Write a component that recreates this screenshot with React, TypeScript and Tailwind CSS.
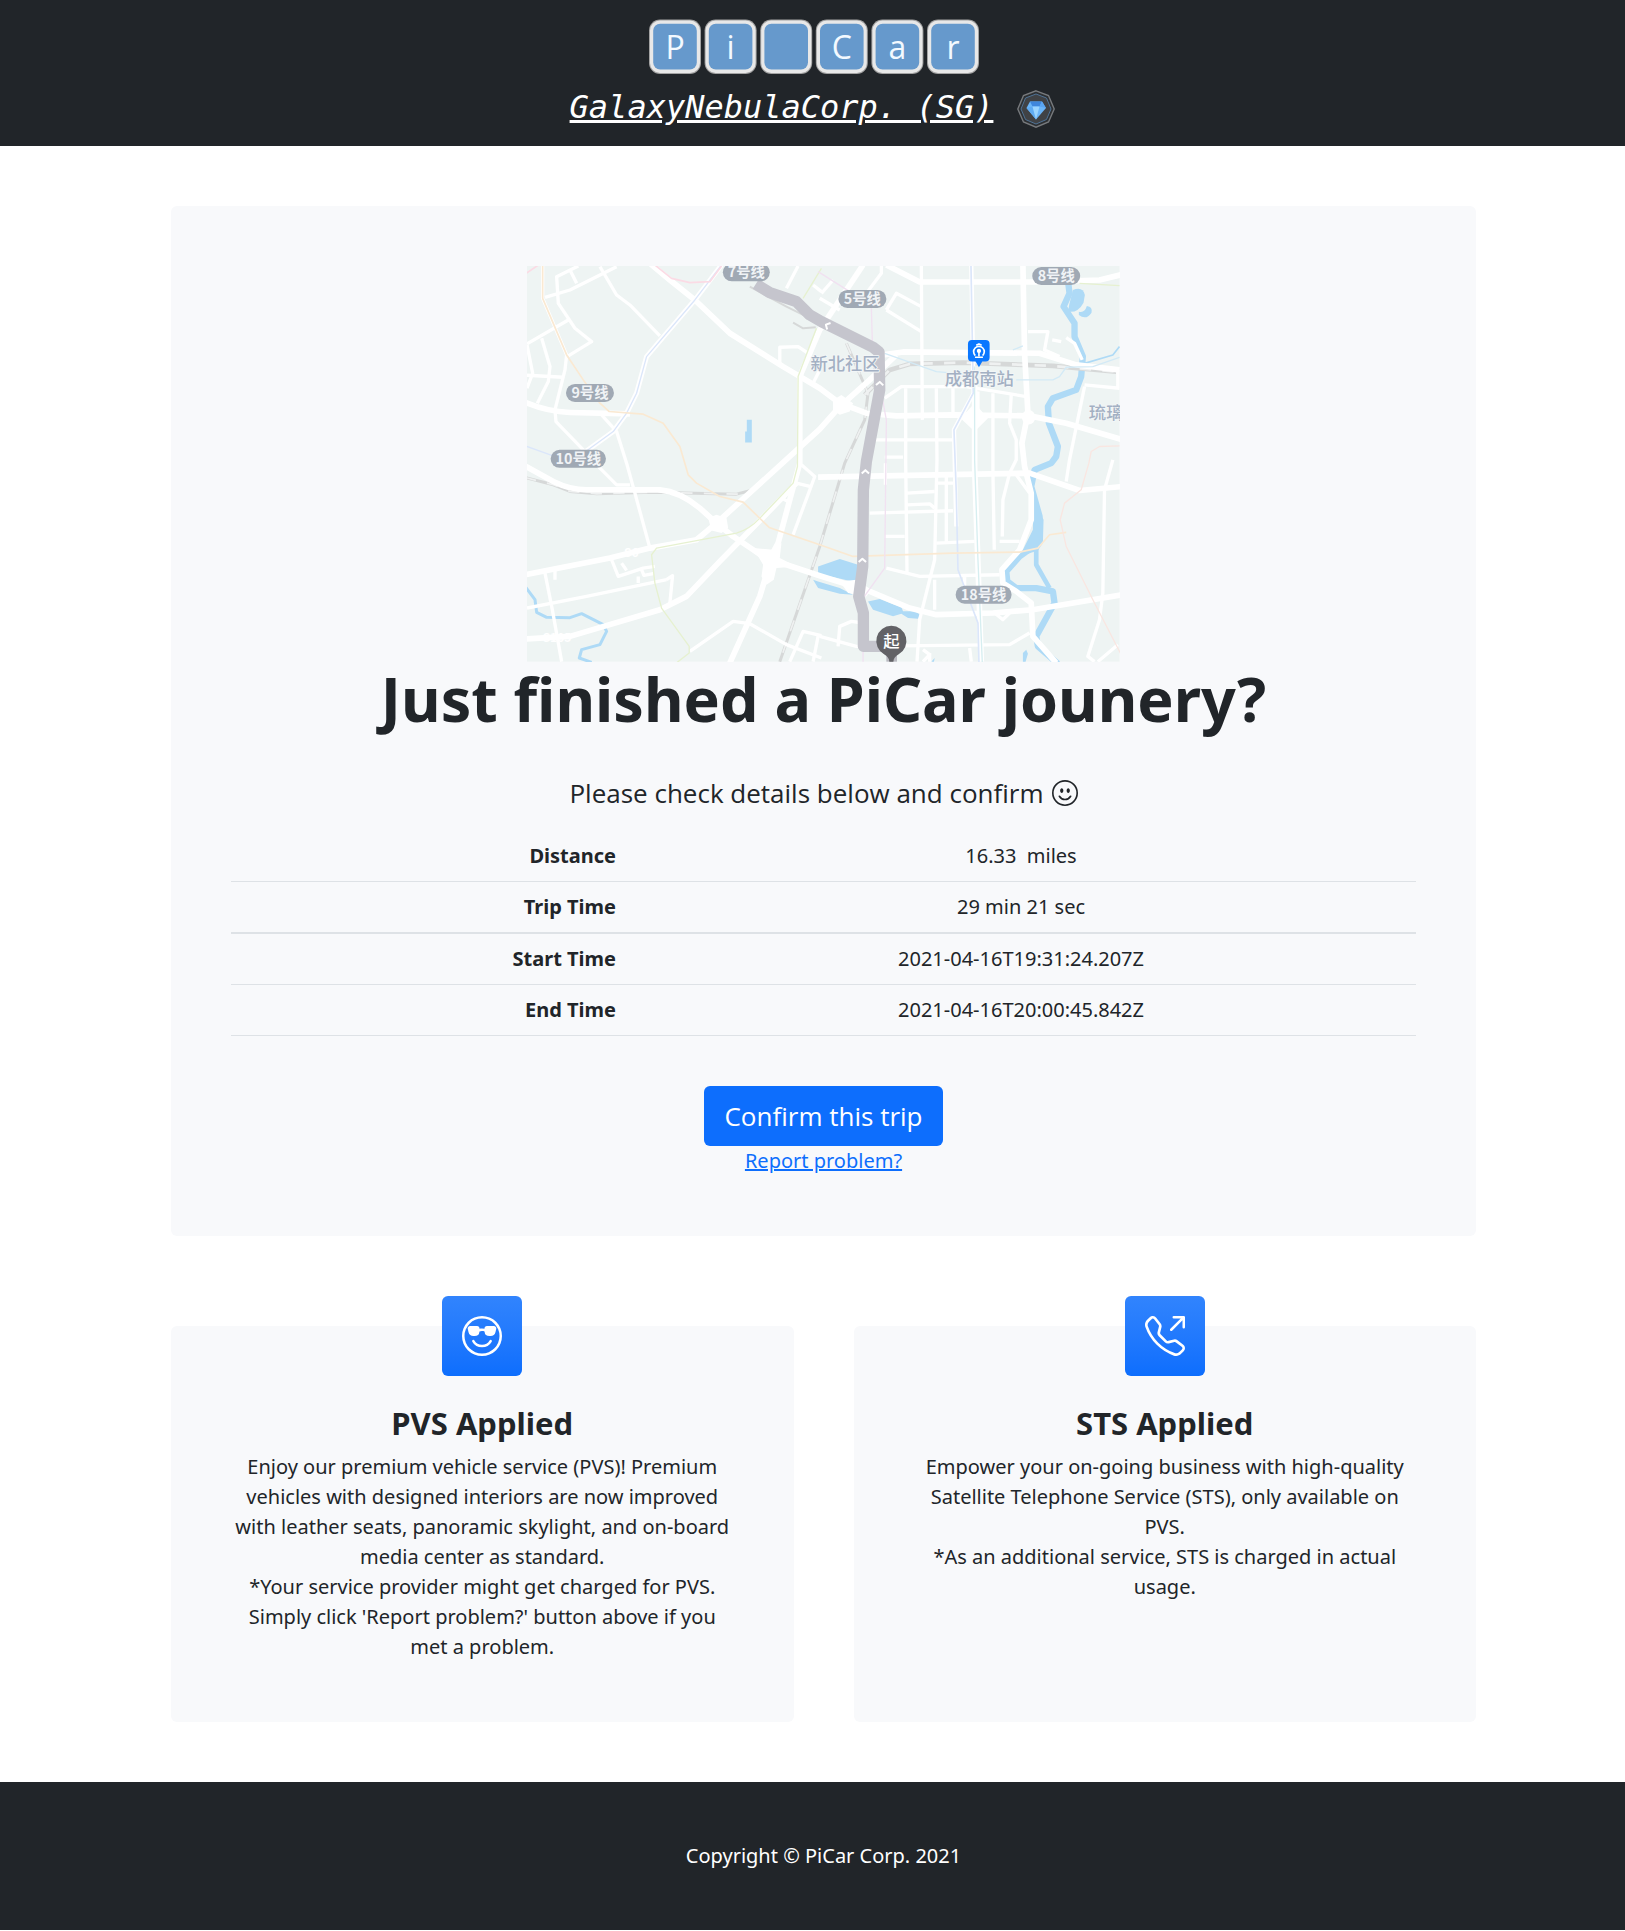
import { BsEmojiSmile, BsEmojiSunglasses, BsTelephoneOutbound } from "react-icons/bs";
import type { ReactNode } from "react";

const LOGO_LETTERS = ["P", "i", "", "C", "a", "r"];

function Logo() {
  return (
    <svg viewBox="0 0 332 56" className="h-14 w-[332px]" role="img" aria-label="Pi Car">
      {LOGO_LETTERS.map((letter, i) => (
        <g key={i} transform={`translate(${2 + i * 55.6} 0)`}>
          <rect x="0" y="0.5" width="52" height="54.5" rx="11" fill="#a3a3a3" />
          <rect x="1" y="1.5" width="50" height="52.5" rx="10" fill="#e8e8e8" />
          <rect x="4.2" y="4.8" width="43.6" height="45.8" rx="7" fill="#6699cc" />
          <text x="26" y="39.5" textAnchor="middle" fontFamily="'Open Sans', sans-serif" fontSize="32" fill="#f3f9ff">
            {letter}
          </text>
        </g>
      ))}
    </svg>
  );
}

function DiamondBadge() {
  return (
    <svg viewBox="0 0 38 38" className="size-[38px]" aria-hidden="true">
      <polygon points="19,0.8 31.5,5.5 37.2,19 31.5,32 19,37.2 6.5,32 0.8,19 6.5,5.5" fill="#2d3033" stroke="#777a7d" strokeWidth="1.4" />
      <polygon points="19,4 29.5,8 34,19 29.5,29.5 19,34 8.5,29.5 4,19 8.5,8" fill="#404245" stroke="#4f7396" strokeWidth="1" />
      <polygon points="13,11.5 25,11.5 29,18 19,29.5 9.5,18" fill="#6bb5f8" />
      <polygon points="13,11.5 25,11.5 22.5,16.5 15.5,16.5" fill="#3f86dc" />
      <polygon points="9.5,18 15.5,16.5 19,29.5" fill="#5fabf2" />
      <polygon points="15.5,16.5 22.5,16.5 19,29.5" fill="#9ad4ff" />
      <polygon points="25,11.5 29,18 22.5,16.5" fill="#5aa5f2" />
    </svg>
  );
}

const THIN_ROADS = [
  "M68 18V115L140 285L135 330L105 450L108 485L190 570L240 625L290 675H330",
  "M75 112L150 90L290 20",
  "M175 18L110 50L115 130L165 205L215 245L145 288",
  "M150 30L170 70",
  "M21 252L145 180",
  "M21 255L38 340L21 385",
  "M65 235L90 320L85 365L52 430",
  "M21 346L130 352",
  "M240 20L290 105L330 135L420 228",
  "M245 465L290 515L320 610L345 700L390 865",
  "M21 1045L200 1010L440 960M440 960L458 948L450 1030",
  "M510 1175L640 1085L690 1092L800 1155L905 1195",
  "M810 1206L850 1115L905 1128M880 1206L895 1130",
  "M75 940L97 1050L125 1206M105 930V960",
  "M275 900L295 950L370 925L405 920M365 930L372 947L400 942M305 910L320 932M355 970V950",
  "M845 615L885 650L820 825M830 670L870 680M785 715L805 725",
  "M780 315V262L835 260L865 280M900 330L880 370",
  "M835 18L800 85M880 75L905 95",
  "M1085 18V40L1040 100M900 115L960 150M905 100L940 60",
  "M1100 150L1130 100L1205 140M1100 150L1205 215",
  "M1205 18L1208 480",
  "M1525 215H1585L1575 270L1620 290M1598 240L1625 245M1640 233L1665 250L1688 300",
  "M1095 415L1145 380H1340L1520 410",
  "M1158 385V600L1162 940",
  "M1250 385L1252 600L1245 900L1200 1080L1192 1206",
  "M1300 385V470M1375 395V470M1420 400V640L1424 870",
  "M1475 405L1470 490L1490 540V600L1470 640L1450 720L1448 830",
  "M1065 540H1300M1095 592H1150",
  "M1162 700L1245 695M1162 735L1230 732L1245 745",
  "M1050 760L1300 753M1250 670H1300M1280 640V850M1250 850L1365 845",
  "M1095 830H1155M1440 845H1500M1097 610V675",
  "M1100 925L1200 950L1440 945M1335 945V980",
  "M1245 960V1050",
  "M1780 600L1755 690L1750 1000L1740 1080L1705 1190L1725 1206",
  "M1640 665L1650 600L1695 380M1695 375L1800 385M1795 385V330",
  "M900 1130L1010 1160L1470 1155L1530 1120",
  "M955 1160L960 1100L995 1085L1030 1090",
  "M1350 1165L1355 1206M1735 1206L1795 1155",
  "M1490 645L1530 700M1425 1060L1450 1080L1470 1060",
  "M1210 1170L1230 1185L1210 1206M1230 1180V1206",
];

const WIDE_ROADS = [
  "M390 10L450 60L525 120L630 220L790 320L900 385L960 430L1040 460L1130 468L1300 465L1530 468L1640 490L1810 540",
  "M15 427Q80 455 150 458L330 462",
  "M15 618L100 665Q150 690 200 690H420Q480 695 540 745L590 790L640 830L700 870L750 905L800 915L900 948L1050 995L1170 1045L1250 1065L1420 1060L1540 1050L1810 1005",
  "M15 945L270 895L390 865L530 840L590 790L900 508L960 440L1050 360L1130 285",
  "M15 1138L150 1130L420 1050L500 1010L600 905L830 670",
  "M750 910L720 1010L630 1210",
  "M745 905L775 850L810 720L840 610V350L900 210L1030 15",
  "M1100 15L1200 66H1560L1740 60L1810 43",
  "M1090 285L1150 276L1560 280L1670 315L1800 330",
  "M1510 15L1515 280L1525 460L1507 550L1515 620L1535 700V780L1500 870L1447 930L1450 970L1490 995L1535 1030L1540 1130L1610 1210",
  "M895 652L1250 645L1530 640L1680 692L1810 680",
  "M1365 350V620L1385 1206",
];

const RIVERS = [
  "M1645 60L1650 100L1632 140L1665 190V230L1690 290L1685 350L1670 390L1600 415L1585 440L1588 490L1615 560L1610 590L1595 610L1545 630L1535 680L1560 770L1555 850L1500 890L1460 935L1463 965L1490 985H1550L1600 995L1605 1030L1550 1130L1555 1160L1615 1212",
  "M1550 860V915L1590 985",
];

const BADGES = [
  { x: 609, y: 10, w: 141, label: "7号线" },
  { x: 956, y: 90, w: 144, label: "5号线" },
  { x: 1538, y: 21, w: 144, label: "8号线" },
  { x: 138, y: 372, w: 144, label: "9号线" },
  { x: 92, y: 570, w: 166, label: "10号线" },
  { x: 1308, y: 978, w: 168, label: "18号线" },
];

const CHEVRONS = [
  { x: 922, y: 196, turn: -62 },
  { x: 1080, y: 370, turn: 2 },
  { x: 1037, y: 635, turn: 0 },
  { x: 1028, y: 901, turn: 0 },
];

function RouteMap() {
  return (
    <svg
      viewBox="21 18 1779 1188"
      className="block h-auto w-1/2"
      role="img"
      aria-label="Trip route map"
      fill="none"
      strokeLinejoin="round"
      fontFamily="'Noto Sans CJK SC', sans-serif"
    >
      <rect x="21" y="18" width="1779" height="1188" fill="#eef4f3" />

      <g stroke="#aedaf6">
        <path d="M15 980L45 1020L50 1058L80 1073L150 1074L185 1062L250 1095L260 1115L240 1155L185 1170L178 1195L215 1208" strokeWidth="9" />
        <path d={RIVERS[0]} strokeWidth="19" />
        <path d={RIVERS[1]} strokeWidth="14" />
        <path d="M1690 312L1780 285L1800 260" strokeWidth="5" />
      </g>
      <g fill="#aedaf6">
        <path d="M681 480H696V548H676V515H681Z" />
        <path d="M1660 90Q1690 78 1696 105L1692 128Q1675 160 1645 155L1650 130Z" />
        <path d="M1678 155Q1695 160 1702 138Q1720 140 1716 158Q1700 182 1678 165Z" />
        <path d="M895 920L960 898L1015 915L1010 968L940 952L895 945Z" />
        <path d="M895 965L960 985L1000 1005L960 1002L895 985L880 960Z" />
        <path d="M1045 1025L1080 1018L1120 1034L1145 1042L1150 1055L1185 1055L1202 1065L1195 1077L1165 1075L1145 1062L1120 1070L1060 1050Z" />
        <path d="M1542 720L1572 780L1570 850L1555 872L1500 890L1540 810Z" />
        <path d="M1510 1180L1520 1170L1525 1182L1518 1206H1510ZM1235 1206L1245 1195L1243 1206Z" />
      </g>

      <g stroke="#d6d8d8" strokeWidth="9">
        <path d="M15 653L100 675L150 695L230 702L400 697L650 703L690 693" />
        <path d="M980 250L1045 400L1035 480L975 610L900 860L780 1206" />
        <path d="M1035 405L1110 330L1170 312L1330 308L1600 318L1790 335" strokeWidth="14" />
        <path d="M690 80L800 140L850 165M820 188L850 205L888 202" strokeWidth="6" />
      </g>
      <g stroke="#eff1f1" strokeWidth="5" strokeDasharray="34 34">
        <path d="M15 653L100 675L150 695L230 702L400 697L650 703L690 693" />
        <path d="M980 250L1045 400L1035 480L975 610L900 860L780 1206" />
        <path d="M1035 405L1110 330L1170 312L1330 308L1600 318L1790 335" strokeWidth="8" />
      </g>

      <g stroke="#ffffff">
        {THIN_ROADS.map((d) => (
          <path key={d} d={d} strokeWidth="10" />
        ))}
        {WIDE_ROADS.map((d) => (
          <path key={d} d={d} strokeWidth="17" />
        ))}
        <path d="M605 15L525 120L380 290L350 400L320 460L280 515L190 580" strokeWidth="15" />
        <path d="M1355 15L1362 400L1303 510L1310 800" strokeWidth="13" />
      </g>
      <g fill="#ffffff">
        <path d="M565 775L590 765L620 775L625 805L605 820L575 812Z" />
        <path d="M700 865L760 870L785 850L780 895L830 920L770 925L762 960L740 975L725 950L730 915Z" />
        <path d="M940 420L965 405L1000 430L990 455L960 465L940 450Z" />
        <path d="M1365 430L1405 475L1365 515L1323 475Z" />
        <ellipse cx="1527" cy="472" rx="20" ry="22" />
        <path d="M960 965L1010 960L1055 990L1040 1010L985 1000Z" />
        <text x="312" y="893" fontSize="36" fontWeight="700">S6</text>
        <text x="68" y="1148" fontSize="36" fontWeight="700">S105</text>
      </g>

      <g strokeWidth="4">
        <path d="M605 15L525 120L380 290L350 400L320 460L280 515L190 580M110 592L15 558" stroke="#dbe6fa" />
        <path d="M1354 15L1361 400L1303 510L1310 700L1315 930L1375 1090L1378 1208" stroke="#dbe6fa" strokeWidth="5" />
        <path d="M1365 320V600L1375 900L1388 1208" stroke="#d6eef0" />
        <path d="M905 25L850 115M890 205L835 350L833 620L820 670L720 775Q690 808 650 820L410 865L395 885L405 970L425 1045L508 1160V1180L472 1208M1680 70L1800 77" stroke="#e6f1d0" />
        <path d="M68 15V115L140 285L190 360L240 430L268 455L370 463L430 490L480 560L505 645L530 670L600 710L670 727L748 803L900 855L1000 890L1300 880L1500 877L1555 865L1590 825L1640 818" stroke="#fae9d2" strokeWidth="5" />
        <path d="M15 42L60 12M405 15L455 55L510 68L570 65L605 18" stroke="#fbdbe5" strokeWidth="5" />
        <path d="M895 35L990 95M1055 145L1058 250M1085 400L1100 480L1095 925L1030 1015V1206" stroke="#f1e1f1" />
        <path d="M1800 558L1740 560L1715 575L1708 610L1685 690L1635 730L1622 780L1640 860L1720 1020L1805 1185" stroke="#f9e6e1" />
        <path d="M1095 280L1250 335L1360 345M1490 360H1600L1620 350L1640 322L1720 320L1800 292M1480 270L1510 258" stroke="#d3eaf6" />
      </g>

      <path d="M708 72L750 98L830 125L870 165L905 185L1060 262L1078 276L1080 390L1040 605L1031 690L1029 920L1017 1010L1031 1060V1160H1120" stroke="#c5c5cd" strokeWidth="34" />
      {CHEVRONS.map(({ x, y, turn }) => (
        <path key={`${x}-${y}`} d="M-11 6L0 -4L11 6" transform={`translate(${x} ${y}) rotate(${turn})`} stroke="#ffffff" strokeWidth="6" />
      ))}

      <g fill="#a3b0c3" stroke="#f4f7f8" strokeWidth="5" paintOrder="stroke" fontSize="52" fontWeight="500">
        <text x="872" y="331">新北社区</text>
        <text x="1275" y="376">成都南站</text>
        <text x="1708" y="476">琉璃</text>
      </g>

      {BADGES.map(({ x, y, w, label }) => (
        <g key={label}>
          <rect x={x} y={y} width={w} height="54" rx="27" fill="#a0a9b4" />
          <text x={x + w / 2} y={y + 42} textAnchor="middle" fontSize="43" fontWeight="700" fill="#f0f3f6">
            {label}
          </text>
        </g>
      ))}

      <path d="M1357 240H1398Q1410 240 1410 252V293Q1410 305 1398 305H1388L1378 322L1368 305H1357Q1345 305 1345 293V252Q1345 240 1357 240Z" fill="#0a77ff" />
      <g stroke="#ffffff" strokeWidth="5">
        <path d="M1367 287A16 16 0 1 1 1389 287" />
        <path d="M1370 256L1378 252L1386 256" />
        <circle cx="1378" cy="273" r="4" fill="#ffffff" />
        <path d="M1378 276V289M1366 292H1390" />
      </g>

      <path d="M1100 1150H1132V1206H1100Z" fill="#b9b9c0" />
      <path d="M1115 1098A46 46 0 0 1 1137 1184Q1122 1192 1121 1206H1109Q1108 1192 1093 1184A46 46 0 0 1 1115 1098Z" fill="#626266" />
      <text x="1115" y="1163" textAnchor="middle" fontSize="49" fontWeight="500" fill="#ffffff">
        起
      </text>
    </svg>
  );
}

const TRIP_ROWS = [
  { name: "Distance", value: "16.33 \u00a0miles", line: "border-b" },
  { name: "Trip Time", value: "29 min 21 sec", line: "border-b-2" },
  { name: "Start Time", value: "2021-04-16T19:31:24.207Z", line: "border-b" },
  { name: "End Time", value: "2021-04-16T20:00:45.842Z", line: "border-b" },
];

function TripCard() {
  return (
    <section className="flex flex-col items-center rounded-md bg-[#f8f9fb] p-15 text-center">
      <RouteMap />
      <h1 className="text-[61px] leading-[74px] font-bold">Just finished a PiCar jounery?</h1>
      <p className="mt-[39px] flex items-center gap-2 font-['Open_Sans',sans-serif] text-[26px] leading-9">
        Please check details below and confirm
        <BsEmojiSmile aria-hidden="true" />
      </p>
      <table className="mt-5 w-full table-fixed border-collapse">
        <tbody>
          {TRIP_ROWS.map(({ name, value, line }) => (
            <tr key={name} className={`${line} border-[#dee2e6]`}>
              <th scope="row" className="w-1/3 p-2.5 text-right font-bold">
                {name}
              </th>
              <td className="p-2.5">{value}</td>
            </tr>
          ))}
        </tbody>
      </table>
      <button
        type="button"
        className="mt-[50px] h-15 cursor-pointer rounded-md bg-[#0d6efd] px-5 font-['Open_Sans',sans-serif] text-[26px] text-white"
      >
        Confirm this trip
      </button>
      <a href="#report" className="text-[#0d6efd] underline">
        Report problem?
      </a>
    </section>
  );
}

function FeatureCard({ icon, title, children }: { icon: ReactNode; title: string; children: ReactNode }) {
  return (
    <section className="flex flex-col items-center rounded-md bg-[#f8f9fb] px-15 pb-15 text-center">
      <div className="-mt-[30px] flex size-20 items-center justify-center rounded-md bg-linear-to-b from-[#3184fd] to-[#0d6efd] text-[40px] text-white">
        {icon}
      </div>
      <h2 className="mt-7 mb-2.5 text-[31px] leading-[38px] font-bold">{title}</h2>
      <p>{children}</p>
    </section>
  );
}

export default function App() {
  return (
    <div className="bg-white font-['Noto_Sans','Open_Sans',sans-serif] text-xl leading-[30px] text-[#212529]">
      <header className="flex flex-col items-center bg-[#212529] pt-[19px] pb-3.5">
        <Logo />
        <div className="mt-[11px] flex items-center gap-6">
          <a
            href="#company"
            className="pb-1 font-['DejaVu_Sans_Mono',monospace] text-[32px] leading-[42px] text-white italic underline"
          >
            GalaxyNebulaCorp. (SG)
          </a>
          <DiamondBadge />
        </div>
      </header>

      <main className="flex flex-col gap-[90px] py-15 pr-[149px] pl-[171px]">
        <TripCard />
        <div className="grid grid-cols-2 gap-15">
          <FeatureCard icon={<BsEmojiSunglasses aria-hidden="true" />} title="PVS Applied">
            Enjoy our premium vehicle service (PVS)! Premium vehicles with designed interiors are now improved with leather
            seats, panoramic skylight, and on-board media center as standard.
            <br />
            *Your service provider might get charged for PVS. Simply click 'Report problem?' button above if you met a
            problem.
          </FeatureCard>
          <FeatureCard icon={<BsTelephoneOutbound aria-hidden="true" />} title="STS Applied">
            Empower your on-going business with high-quality Satellite Telephone Service (STS), only available on PVS.
            <br />
            *As an additional service, STS is charged in actual usage.
          </FeatureCard>
        </div>
      </main>

      <footer className="bg-[#212529] py-[59px] pr-[149px] pl-[171px] text-center text-white">Copyright © PiCar Corp. 2021</footer>
    </div>
  );
}
